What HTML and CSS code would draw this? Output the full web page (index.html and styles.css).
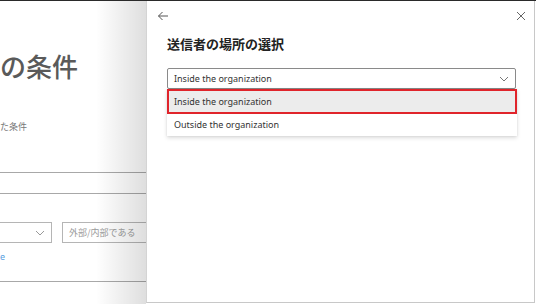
FILE: index.html
```html
<!DOCTYPE html>
<html lang="ja">
<head>
<meta charset="utf-8">
<link rel="stylesheet" href="styles.css">
</head>
<body>
<div class="screen">
  <div class="page">
    <h1 class="page-title">の条件</h1>
    <div class="page-sub">た条件</div>
    <div class="rule"></div>
    <div class="rule rule-2"></div>
    <div class="field-row">
      <div class="fake-select">
        <svg class="chev" width="10" height="6" viewBox="0 0 10 6"><path d="M1 1l4 4 4-4" fill="none" stroke="#999" stroke-width="1"/></svg>
      </div>
      <div class="fake-input">外部/内部である</div>
    </div>
    <div class="page-link">e</div>
    <div class="rule rule-3"></div>
  </div>
  <div class="panel">
    <div class="panel-top">
      <svg class="icon" width="12" height="10" viewBox="0 0 12 10"><path d="M11 5H1.5M5.5 1L1.5 5l4 4" fill="none" stroke="#555" stroke-width="1"/></svg>
      <svg class="icon" width="10" height="10" viewBox="0 0 10 10"><path d="M1 1l8 8M9 1l-8 8" fill="none" stroke="#666" stroke-width="1"/></svg>
    </div>
    <h2 class="panel-title">送信者の場所の選択</h2>
    <div class="dropdown">
      <div class="select">
        <span>Inside the organization</span>
        <svg width="10" height="6" viewBox="0 0 10 6"><path d="M1 1l4 4 4-4" fill="none" stroke="#777" stroke-width="1"/></svg>
      </div>
      <ul class="options">
        <li class="option selected">Inside the organization</li>
        <li class="option">Outside the organization</li>
      </ul>
    </div>
  </div>
</div>
</body>
</html>
```
FILE: styles.css
```css
html, body {
  margin: 0;
  padding: 0;
  background: #fff;
}
.screen {
  display: flex;
  width: 536px;
  height: 304px;
  box-sizing: border-box;
  border-top: 1px solid #2a2a2a;
  overflow: hidden;
  font-family: "Noto Sans", "Noto Sans CJK JP", sans-serif;
}
.page {
  position: relative;
  width: 146px;
  flex: none;
  overflow: hidden;
  color: #666;
}
.page::after {
  content: "";
  position: absolute;
  top: 0;
  right: 0;
  bottom: 0;
  width: 50px;
  background: linear-gradient(to right, rgba(0,0,0,0), rgba(0,0,0,0.13));
}
.page-title {
  margin: 47px 0 0 0;
  font-family: "Noto Sans CJK JP", sans-serif;
  font-size: 26px;
  line-height: 36px;
  font-weight: 500;
  color: #5a5a5a;
  letter-spacing: 0;
}
.page-sub {
  margin-top: 36px;
  font-family: "Noto Sans CJK JP", sans-serif;
  font-size: 9px;
  line-height: 14px;
  color: #777;
}
.rule {
  height: 1px;
  background: #a8a8a8;
  margin-top: 38px;
}
.rule-2 {
  margin-top: 20px;
}
.field-row {
  display: flex;
  gap: 10px;
  margin-top: 28px;
}
.fake-select {
  width: 52px;
  height: 21px;
  box-sizing: border-box;
  border: 1px solid #b5b5b5;
  border-left: none;
  display: flex;
  align-items: center;
  justify-content: flex-end;
  padding-right: 6px;
  flex: none;
}
.fake-input {
  width: 100px;
  height: 21px;
  box-sizing: border-box;
  border: 1px solid #b5b5b5;
  padding-left: 6px;
  font-family: "Noto Sans CJK JP", sans-serif;
  font-size: 9px;
  line-height: 19px;
  color: #9a9a9a;
  flex: none;
}
.page-link {
  margin-top: 9px;
  font-size: 9px;
  line-height: 10px;
  color: #5aa0e0;
}
.rule-3 {
  margin-top: 19px;
}
.panel {
  flex: 1;
  box-sizing: border-box;
  border-right: 1px solid #c8c8c8;
  border-bottom: 1px solid #c8c8c8;
  border-left: 1px solid #d4d4d4;
  margin-right: 1px;
  margin-bottom: 1px;
  padding: 0 18px 0 20px;
  background: #fff;
}
.panel-top {
  display: flex;
  justify-content: space-between;
  align-items: center;
  height: 30px;
  margin-left: -10px;
  margin-right: -10px;
}
.panel-title {
  margin: 3px 0 0 0;
  font-family: "Noto Sans CJK JP", sans-serif;
  font-size: 13px;
  line-height: 20px;
  font-weight: 700;
  color: #222;
}
.dropdown {
  margin-top: 14px;
  width: 349px;
}
.select {
  height: 21px;
  box-sizing: border-box;
  border: 1px solid #8a8a8a;
  border-radius: 2px;
  display: flex;
  align-items: center;
  justify-content: space-between;
  padding: 0 6px 0 6px;
  font-size: 9px;
  color: #333;
}
.options {
  list-style: none;
  margin: 0;
  padding: 0;
  width: 350px;
  box-shadow: 0 2px 4px rgba(0,0,0,0.14), 0 0 2px rgba(0,0,0,0.08);
  background: #fff;
}
.option {
  height: 22px;
  line-height: 22px;
  padding-left: 7px;
  font-size: 9px;
  color: #333;
  box-sizing: border-box;
}
.option.selected {
  background: #ececec;
  border: 2px solid #e0242b;
  line-height: 21px;
  padding-left: 5px;
  height: 25px;
}
```
